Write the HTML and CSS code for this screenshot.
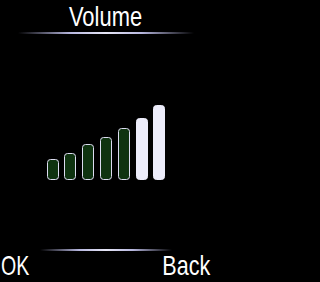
FILE: index.html
```html
<!DOCTYPE html>
<html>
<head>
<meta charset="utf-8">
<link rel="stylesheet" href="styles.css">
</head>
<body>
<div class="screen">
  <header class="header">
    <h1 class="title"><span class="narrow">Volume</span></h1>
    <div class="rule rule-top"></div>
  </header>
  <main class="meter">
    <div class="bar" style="height:21px"></div>
    <div class="bar" style="height:27px"></div>
    <div class="bar" style="height:36px"></div>
    <div class="bar" style="height:43px"></div>
    <div class="bar" style="height:52px"></div>
    <div class="bar bar-on" style="height:62px"></div>
    <div class="bar bar-on" style="height:75px"></div>
  </main>
  <footer class="footer">
    <div class="rule rule-bottom"></div>
    <div class="softkeys">
      <span class="narrow key-left">OK</span>
      <span class="narrow key-right">Back</span>
    </div>
  </footer>
</div>
</body>
</html>
```
FILE: styles.css
```css
html, body {
  margin: 0;
  padding: 0;
  background: #000;
}
.screen {
  width: 212px;
  height: 282px;
  display: flex;
  flex-direction: column;
  background: #000;
  color: #fff;
  font-family: "Liberation Sans", Arial, sans-serif;
  overflow: hidden;
}
.narrow {
  display: inline-block;
  transform: scaleX(0.77);
}
.header {
  display: flex;
  flex-direction: column;
  align-items: center;
}
.title {
  margin: 0;
  font-size: 28.5px;
  font-weight: normal;
  line-height: 28px;
  height: 32px;
  padding-top: 2px;
  box-sizing: border-box;
}
.title .narrow {
  transform-origin: center;
}
.rule {
  height: 2px;
  background: linear-gradient(to right, rgba(180,180,230,0) 0%, #b8b8e0 30%, #e6e6f6 50%, #b8b8e0 70%, rgba(180,180,230,0) 100%);
}
.rule-top {
  align-self: stretch;
  margin: 0 18px;
}
.meter {
  flex: 1;
  display: flex;
  align-items: flex-end;
  justify-content: center;
  gap: 5.8px;
  padding-bottom: 69px;
}
.bar {
  box-sizing: border-box;
  width: 12px;
  border: 1.5px solid #dcdcf0;
  border-radius: 3.5px;
  background: #0f3310;
}
.bar-on {
  background: #ececfa;
  border-color: #ececfa;
}
.footer {
  display: flex;
  flex-direction: column;
  padding-bottom: 2px;
}
.rule-bottom {
  margin: 0 40px 1px;
}
.softkeys {
  display: flex;
  justify-content: space-between;
  font-size: 28px;
  line-height: 28px;
  padding: 0 2px 0 1px;
}
.key-left {
  transform: scaleX(0.7);
  transform-origin: left center;
}
.key-right {
  transform-origin: right center;
}
```
